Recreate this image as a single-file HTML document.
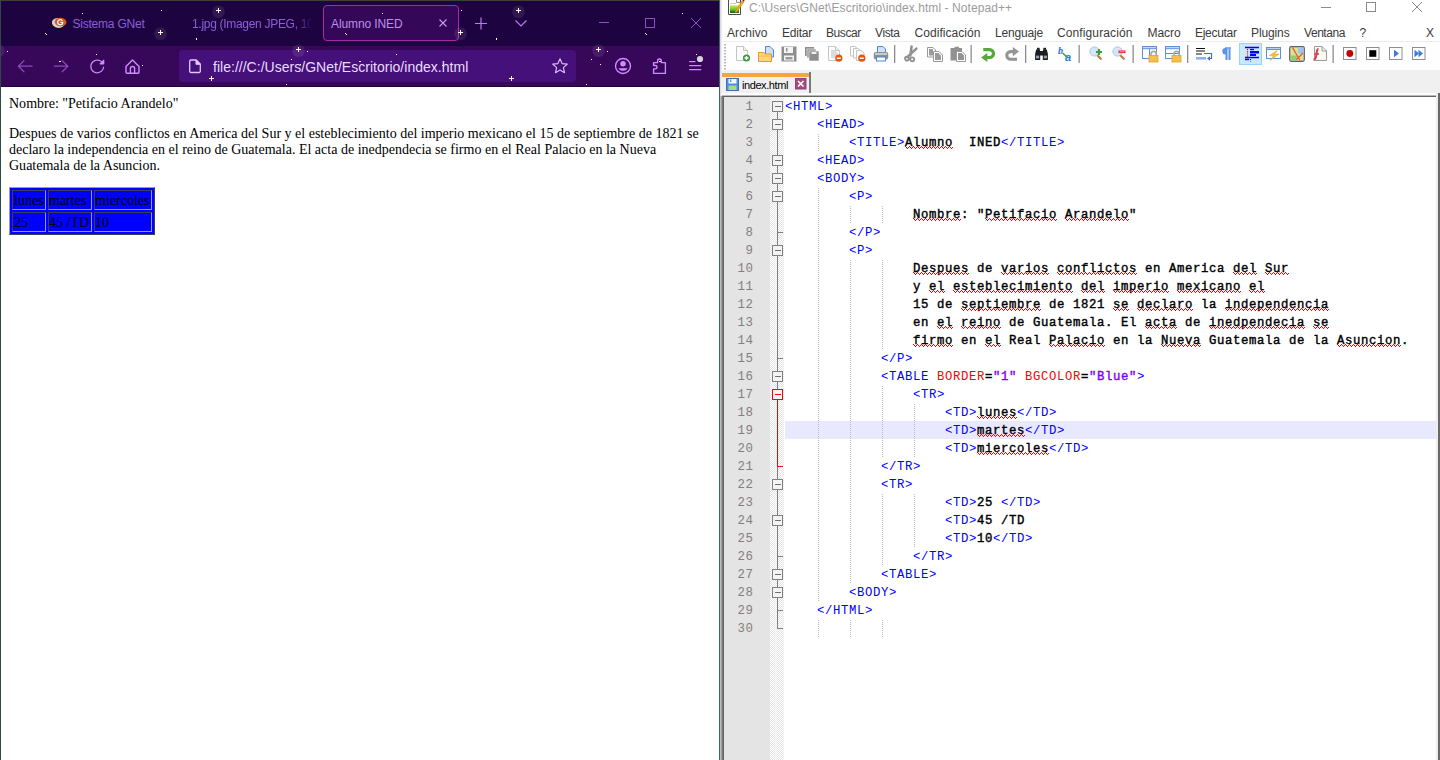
<!DOCTYPE html>
<html><head><meta charset="utf-8"><title>Alumno INED</title>
<style>
*{box-sizing:border-box}
html,body{margin:0;padding:0}
body{width:1440px;height:760px;position:relative;overflow:hidden;background:#fff;font-family:"Liberation Sans",sans-serif}
.abs{position:absolute}
#ff{position:absolute;left:0;top:0;width:720px;height:760px;overflow:hidden;background:#fff}
#tabbar{position:absolute;left:0;top:0;width:720px;height:46px;background:#1e0341}
#navbar{position:absolute;left:0;top:46px;width:720px;height:41px;background:#37075a;border-bottom:1px solid #21023f}
.t12{font-size:12px;line-height:14px;white-space:pre;position:absolute}
#page{position:absolute;left:1px;top:87px;width:718px;height:673px;background:#fff;font-family:"Liberation Serif",serif;font-size:14.03px;line-height:16px;color:#000}
#page div.p{position:absolute;left:8px;white-space:pre}
#npp{position:absolute;left:720px;top:0;width:720px;height:760px;background:#fff;overflow:hidden}
.menu{position:absolute;top:26px;font-size:12px;line-height:14px;color:#3a3a3a;white-space:pre}
#ed{position:absolute;left:0;top:96px;width:720px;height:664px;font-family:"Liberation Mono",monospace;font-size:13.333px}
.ln{position:absolute;left:4px;width:29.5px;text-align:right;color:#808080;height:18px;line-height:20px;font-size:12.4px;letter-spacing:0.55px}
.cl{position:absolute;left:65px;height:18px;line-height:20px;white-space:pre;color:#000;font-size:12.3px;letter-spacing:0.62px;font-weight:normal;-webkit-text-stroke:0.4px #000}
.cl b{font-weight:normal;color:#0000ff;-webkit-text-stroke:0}
.cl i{font-style:normal;font-weight:normal;color:#ff0000;-webkit-text-stroke:0}
.cl u{text-decoration:none;color:#8000ff;-webkit-text-stroke:0.4px #8000ff}
</style></head><body>

<div id="ff">
<div id="tabbar"></div><div id="navbar"></div>
<div class="abs" style="left:323px;top:5px;width:136px;height:36px;background:#340758;border:1px solid #a826b0;border-radius:4px"></div><div class="abs" style="left:179px;top:50px;width:397px;height:32px;background:#45107a;border-radius:4px"></div><svg class="abs" style="left:0;top:0" width="720" height="87" viewBox="0 0 720 87" shape-rendering="crispEdges"><circle cx="-81.5" cy="11.8" r="6.3" fill="#fff" opacity="0.085" shape-rendering="auto"/><circle cx="-139.5" cy="33.8" r="6.3" fill="#fff" opacity="0.085" shape-rendering="auto"/><circle cx="-1.5" cy="50.8" r="6.3" fill="#fff" opacity="0.085" shape-rendering="auto"/><rect x="-218" y="13" width="1" height="1" fill="#fffbe8"/><rect x="-139" y="10" width="1" height="1" fill="#fffbe8"/><rect x="-255" y="33" width="1" height="1" fill="#fffbe8"/><rect x="-254" y="34" width="1" height="1" fill="#fffbe8"/><rect x="-104" y="38" width="1" height="2" fill="#fffbe8"/><rect x="-293" y="51" width="1" height="1" fill="#fffbe8"/><rect x="-204" y="54" width="1" height="1" fill="#fffbe8"/><rect x="-240" y="61" width="1" height="1" fill="#fffbe8"/><rect x="-241" y="61" width="1" height="1" fill="#fffbe8"/><rect x="-158" y="65" width="1" height="1" fill="#fffbe8"/><rect x="-9" y="59" width="1" height="1" fill="#fffbe8"/><rect x="-14" y="84" width="1" height="1" fill="#fffbe8"/><rect x="-300" y="64" width="1" height="1" fill="#fffbe8"/><rect x="-84" y="10" width="5" height="1" fill="#fffbe8"/><rect x="-82" y="8" width="1" height="5" fill="#fffbe8"/><rect x="-142" y="32" width="5" height="1" fill="#fffbe8"/><rect x="-140" y="30" width="1" height="5" fill="#fffbe8"/><rect x="-4" y="49" width="5" height="1" fill="#fffbe8"/><rect x="-2" y="47" width="1" height="5" fill="#fffbe8"/><rect x="-91" y="78" width="5" height="1" fill="#fffbe8"/><rect x="-89" y="76" width="1" height="5" fill="#fffbe8"/><circle cx="218.5" cy="11.8" r="6.3" fill="#fff" opacity="0.085" shape-rendering="auto"/><circle cx="160.5" cy="33.8" r="6.3" fill="#fff" opacity="0.085" shape-rendering="auto"/><circle cx="298.5" cy="50.8" r="6.3" fill="#fff" opacity="0.085" shape-rendering="auto"/><rect x="82" y="13" width="1" height="1" fill="#fffbe8"/><rect x="161" y="10" width="1" height="1" fill="#fffbe8"/><rect x="45" y="33" width="1" height="1" fill="#fffbe8"/><rect x="46" y="34" width="1" height="1" fill="#fffbe8"/><rect x="196" y="38" width="1" height="2" fill="#fffbe8"/><rect x="7" y="51" width="1" height="1" fill="#fffbe8"/><rect x="96" y="54" width="1" height="1" fill="#fffbe8"/><rect x="60" y="61" width="1" height="1" fill="#fffbe8"/><rect x="59" y="61" width="1" height="1" fill="#fffbe8"/><rect x="142" y="65" width="1" height="1" fill="#fffbe8"/><rect x="291" y="59" width="1" height="1" fill="#fffbe8"/><rect x="286" y="84" width="1" height="1" fill="#fffbe8"/><rect x="0" y="64" width="1" height="1" fill="#fffbe8"/><rect x="216" y="10" width="5" height="1" fill="#fffbe8"/><rect x="218" y="8" width="1" height="5" fill="#fffbe8"/><rect x="158" y="32" width="5" height="1" fill="#fffbe8"/><rect x="160" y="30" width="1" height="5" fill="#fffbe8"/><rect x="296" y="49" width="5" height="1" fill="#fffbe8"/><rect x="298" y="47" width="1" height="5" fill="#fffbe8"/><rect x="209" y="78" width="5" height="1" fill="#fffbe8"/><rect x="211" y="76" width="1" height="5" fill="#fffbe8"/><circle cx="518.5" cy="11.8" r="6.3" fill="#fff" opacity="0.085" shape-rendering="auto"/><circle cx="460.5" cy="33.8" r="6.3" fill="#fff" opacity="0.085" shape-rendering="auto"/><circle cx="598.5" cy="50.8" r="6.3" fill="#fff" opacity="0.085" shape-rendering="auto"/><rect x="382" y="13" width="1" height="1" fill="#fffbe8"/><rect x="461" y="10" width="1" height="1" fill="#fffbe8"/><rect x="345" y="33" width="1" height="1" fill="#fffbe8"/><rect x="346" y="34" width="1" height="1" fill="#fffbe8"/><rect x="496" y="38" width="1" height="2" fill="#fffbe8"/><rect x="307" y="51" width="1" height="1" fill="#fffbe8"/><rect x="396" y="54" width="1" height="1" fill="#fffbe8"/><rect x="360" y="61" width="1" height="1" fill="#fffbe8"/><rect x="359" y="61" width="1" height="1" fill="#fffbe8"/><rect x="442" y="65" width="1" height="1" fill="#fffbe8"/><rect x="591" y="59" width="1" height="1" fill="#fffbe8"/><rect x="586" y="84" width="1" height="1" fill="#fffbe8"/><rect x="300" y="64" width="1" height="1" fill="#fffbe8"/><rect x="516" y="10" width="5" height="1" fill="#fffbe8"/><rect x="518" y="8" width="1" height="5" fill="#fffbe8"/><rect x="458" y="32" width="5" height="1" fill="#fffbe8"/><rect x="460" y="30" width="1" height="5" fill="#fffbe8"/><rect x="596" y="49" width="5" height="1" fill="#fffbe8"/><rect x="598" y="47" width="1" height="5" fill="#fffbe8"/><rect x="509" y="78" width="5" height="1" fill="#fffbe8"/><rect x="511" y="76" width="1" height="5" fill="#fffbe8"/><circle cx="818.5" cy="11.8" r="6.3" fill="#fff" opacity="0.085" shape-rendering="auto"/><circle cx="760.5" cy="33.8" r="6.3" fill="#fff" opacity="0.085" shape-rendering="auto"/><circle cx="898.5" cy="50.8" r="6.3" fill="#fff" opacity="0.085" shape-rendering="auto"/><rect x="682" y="13" width="1" height="1" fill="#fffbe8"/><rect x="761" y="10" width="1" height="1" fill="#fffbe8"/><rect x="645" y="33" width="1" height="1" fill="#fffbe8"/><rect x="646" y="34" width="1" height="1" fill="#fffbe8"/><rect x="796" y="38" width="1" height="2" fill="#fffbe8"/><rect x="607" y="51" width="1" height="1" fill="#fffbe8"/><rect x="696" y="54" width="1" height="1" fill="#fffbe8"/><rect x="660" y="61" width="1" height="1" fill="#fffbe8"/><rect x="659" y="61" width="1" height="1" fill="#fffbe8"/><rect x="742" y="65" width="1" height="1" fill="#fffbe8"/><rect x="891" y="59" width="1" height="1" fill="#fffbe8"/><rect x="886" y="84" width="1" height="1" fill="#fffbe8"/><rect x="600" y="64" width="1" height="1" fill="#fffbe8"/><rect x="816" y="10" width="5" height="1" fill="#fffbe8"/><rect x="818" y="8" width="1" height="5" fill="#fffbe8"/><rect x="758" y="32" width="5" height="1" fill="#fffbe8"/><rect x="760" y="30" width="1" height="5" fill="#fffbe8"/><rect x="896" y="49" width="5" height="1" fill="#fffbe8"/><rect x="898" y="47" width="1" height="5" fill="#fffbe8"/><rect x="809" y="78" width="5" height="1" fill="#fffbe8"/><rect x="811" y="76" width="1" height="5" fill="#fffbe8"/></svg><svg class="abs" style="left:50px;top:15px" width="20" height="16" viewBox="50 15 20 16"><ellipse cx="57.8" cy="24.2" rx="6.6" ry="4.6" fill="#0c0c0c" transform="rotate(18 57.8 24.2)"/><ellipse cx="58.2" cy="23" rx="6.4" ry="4.9" fill="#cfcfd8" transform="rotate(12 58.2 23)"/><ellipse cx="60.6" cy="22" rx="5.9" ry="4.3" fill="#e4560e" transform="rotate(8 60.6 22)"/><path d="M62.4 20.6A2.7 2.5 0 1 0 62.6 23.6V22.4H60.6" fill="none" stroke="#fff" stroke-width="1.25"/></svg><div class="t12" style="left:72.5px;top:17px;color:#8a5fd6;letter-spacing:-0.22px">Sistema GNet</div><div class="t12" style="left:192px;top:17px;width:121px;overflow:hidden;color:#8a5fd6;letter-spacing:-0.3px;-webkit-mask-image:linear-gradient(90deg,#000 84%,transparent 100%);mask-image:linear-gradient(90deg,#000 84%,transparent 100%)">1.jpg (Imagen JPEG, 1000</div><div class="t12" style="left:331px;top:17px;color:#b98fe8;letter-spacing:-0.1px">Alumno INED</div><svg class="abs" style="left:436px;top:16px" width="14" height="14" viewBox="0 0 14 14"><path d="M3.5 3.5L10.5 10.5M10.5 3.5L3.5 10.5" stroke="#c59cf0" stroke-width="1.1" fill="none"/></svg><svg class="abs" style="left:470px;top:10px" width="250" height="28" viewBox="0 0 250 28"><g stroke="#b77cf0" stroke-width="1.2" fill="none"><path d="M5 13.5H17M11 7.5V19.5"/><path d="M45.5 10.5L51 16L56.5 10.5"/></g><g stroke="#8a4fc8" stroke-width="1" fill="none"><path d="M129 12.5H139"/><rect x="175.5" y="8.5" width="9" height="9"/><path d="M221 8L231 18M231 8L221 18"/></g></svg><svg class="abs" style="left:10px;top:52px" width="140" height="28" viewBox="10 52 140 28"><g stroke="#8b49ba" stroke-width="1.25" fill="none" stroke-linecap="round" stroke-linejoin="round"><path d="M32 66.2H18.6M24 60.6L18.4 66.2L24 71.8"/><path d="M54.4 66.2H67.6M62.2 60.6L67.8 66.2L62.2 71.8"/></g><g transform="translate(89.3 58.4) scale(1.0)" fill="#d08cff"><path d="M10.707 6H14.25A.75.75 0 0 0 15 5.25V1.707a.5.5 0 0 0-.854-.353l-1.459 1.459A6.95 6.95 0 0 0 8 1C4.141 1 1 4.141 1 8s3.141 7 7 7a6.97 6.97 0 0 0 6.968-6.322.626.626 0 0 0-.562-.682.635.635 0 0 0-.682.562A5.726 5.726 0 0 1 8 13.750c-3.171 0-5.750-2.579-5.750-5.750S4.829 2.250 8 2.250a5.710 5.710 0 0 1 3.805 1.445l-1.451 1.451a.5.5 0 0 0 .353.854z"/></g><g stroke="#d08cff" stroke-width="1.4" fill="none" stroke-linejoin="round"><path d="M126 66.4L132.5 59.9L139 66.4V72.2A1 1 0 0 1 138 73.2H127A1 1 0 0 1 126 72.2Z"/><path d="M130.4 73V68.6A2.1 2.1 0 0 1 134.6 68.6V73"/></g></svg><svg class="abs" style="left:188px;top:59px" width="14" height="15" viewBox="0 0 14 15"><path d="M1.7 2.2A1.2 1.2 0 0 1 2.9 1H8.2L12.3 5.1V12.3A1.2 1.2 0 0 1 11.1 13.5H2.9A1.2 1.2 0 0 1 1.7 12.3Z" fill="none" stroke="#e3c8ff" stroke-width="1.3"/><path d="M8 1V5.3H12.3" fill="#e3c8ff" stroke="#e3c8ff" stroke-width="1"/></svg><div class="abs" style="left:213px;top:59px;font-size:14px;line-height:17px;color:#eadcff;white-space:pre;letter-spacing:0.02px">file:///C:/Users/GNet/Escritorio/index.html</div><svg class="abs" style="left:551px;top:57px" width="18" height="18" viewBox="0 0 18 18"><path d="M9 1.8L11.1 6.6L16.3 7.1L12.4 10.6L13.5 15.7L9 13.1L4.5 15.7L5.6 10.6L1.7 7.1L6.9 6.6Z" fill="none" stroke="#e0bdf8" stroke-width="1.15" stroke-linejoin="round"/></svg><svg class="abs" style="left:610px;top:52px" width="100" height="28" viewBox="610 52 100 28"><g stroke="#d08cff" stroke-width="1.35" fill="none" stroke-linejoin="round"><circle cx="623" cy="66" r="7.5"/><circle cx="623" cy="63.8" r="2.1" fill="#d08cff"/><path d="M618.8 68.6H627.2A4.6 3.2 0 0 1 618.8 68.6Z" fill="#d08cff" stroke-width=".6"/><path d="M653.6 73.4V68.9H655.3A1.7 1.7 0 0 0 655.3 65.5H653.6V62.6H657.6V60.9A1.85 1.85 0 0 1 661.3 60.9V62.6H665.4V73.4Z"/><path d="M689.6 61.5H695M689.6 65.6H700.8M689.6 69.7H700.8" stroke-linecap="round" stroke-width="1.25"/></g><circle cx="700" cy="59" r="3.1" fill="#d9d2de"/></svg>
<div id="page">
<div class="p" style="top:8px">Nombre: "Petifacio Arandelo"</div>
<div class="p" style="top:38px">Despues de varios conflictos en America del Sur y el esteblecimiento del imperio mexicano el 15 de septiembre de 1821 se
declaro la independencia en el reino de Guatemala. El acta de inedpendecia se firmo en el Real Palacio en la Nueva
Guatemala de la Asuncion.</div>
<div class="abs" id="tbl" style="left:8px;top:100px;width:146px;height:48px;background:#0000ff;border:1px solid;border-color:#9a9aa8 #3c3c58 #3c3c58 #9a9aa8"></div>
<div class="abs" style="left:11px;top:103px;width:34px;height:20px;border:1px solid;border-color:#3c3c58 #9a9aa8 #9a9aa8 #3c3c58;padding:1px 0 0 1px;white-space:pre;line-height:16px">lunes</div>
<div class="abs" style="left:47px;top:103px;width:44px;height:20px;border:1px solid;border-color:#3c3c58 #9a9aa8 #9a9aa8 #3c3c58;padding:1px 0 0 0px;white-space:pre;line-height:16px">martes</div>
<div class="abs" style="left:93px;top:103px;width:58px;height:20px;border:1px solid;border-color:#3c3c58 #9a9aa8 #9a9aa8 #3c3c58;padding:1px 0 0 0px;white-space:pre;line-height:16px">miercoles</div>
<div class="abs" style="left:11px;top:125px;width:34px;height:20px;border:1px solid;border-color:#3c3c58 #9a9aa8 #9a9aa8 #3c3c58;padding:1px 0 0 1px;white-space:pre;line-height:16px">25</div>
<div class="abs" style="left:47px;top:125px;width:44px;height:20px;border:1px solid;border-color:#3c3c58 #9a9aa8 #9a9aa8 #3c3c58;padding:1px 0 0 0px;white-space:pre;line-height:16px">45 /TD</div>
<div class="abs" style="left:93px;top:125px;width:58px;height:20px;border:1px solid;border-color:#3c3c58 #9a9aa8 #9a9aa8 #3c3c58;padding:1px 0 0 0px;white-space:pre;line-height:16px">10</div>
</div>
<div class="abs" style="left:0;top:0;width:720px;height:1px;background:#3f4039"></div>
<div class="abs" style="left:0;top:0;width:1px;height:760px;background:#2f4a45"></div>
<div class="abs" style="left:719px;top:0;width:1px;height:760px;background:#3d6663"></div>
</div>
<div id="npp">
<div class="t12" style="left:29px;top:1px;color:#9b9b9b;letter-spacing:0.08px">C:\Users\GNet\Escritorio\index.html - Notepad++</div>
<svg class="abs" style="left:590px;top:0" width="130" height="20" viewBox="0 0 130 20"><g stroke="#8a8a8a" stroke-width="1" fill="none"><path d="M11 7.5H21"/><rect x="56.5" y="2.5" width="9" height="9"/><path d="M102 2L112 12M112 2L102 12"/></g></svg>
<div class="menu" style="left:7px;letter-spacing:0.07px">Archivo</div>
<div class="menu" style="left:62px;letter-spacing:-0.23px">Editar</div>
<div class="menu" style="left:106px;letter-spacing:-0.43px">Buscar</div>
<div class="menu" style="left:155px;letter-spacing:-0.39px">Vista</div>
<div class="menu" style="left:194.5px;letter-spacing:0.05px">Codificación</div>
<div class="menu" style="left:275px;letter-spacing:-0.17px">Lenguaje</div>
<div class="menu" style="left:337px;letter-spacing:0.11px">Configuración</div>
<div class="menu" style="left:427.5px;letter-spacing:-0.07px">Macro</div>
<div class="menu" style="left:475px;letter-spacing:-0.29px">Ejecutar</div>
<div class="menu" style="left:531px;letter-spacing:-0.12px">Plugins</div>
<div class="menu" style="left:584px;letter-spacing:-0.44px">Ventana</div>
<div class="menu" style="left:639.5px;letter-spacing:0.00px">?</div>
<div class="menu" style="left:706px;letter-spacing:0.00px">X</div>
<div class="abs" style="left:0;top:41px;width:720px;height:1px;background:#ececec"></div>
<div class="abs" style="left:0;top:42px;width:720px;height:28px;background:#fefefe"></div>
<div class="abs" style="left:0;top:70px;width:720px;height:26px;background:#f0f0f0"></div>
<div class="abs" style="left:2px;top:72px;width:89px;height:23px;background:#f0f0f0;border-right:2px solid #7a7a7a"></div>
<div class="abs" style="left:2px;top:73px;width:87px;height:4px;background:#f9a33b"></div>
<div class="abs" style="left:22px;top:78px;color:#000;font-size:11px;line-height:14px;letter-spacing:-0.42px;white-space:pre">index.html</div>
<svg class="abs" style="left:0;top:42px" width="720" height="54" viewBox="720 42 720 54"><rect x="724" y="44" width="2" height="1.5" fill="#b8b8b8"/><rect x="724" y="47" width="2" height="1.5" fill="#b8b8b8"/><rect x="724" y="50" width="2" height="1.5" fill="#b8b8b8"/><rect x="724" y="53" width="2" height="1.5" fill="#b8b8b8"/><rect x="724" y="56" width="2" height="1.5" fill="#b8b8b8"/><rect x="724" y="59" width="2" height="1.5" fill="#b8b8b8"/><rect x="724" y="62" width="2" height="1.5" fill="#b8b8b8"/><rect x="724" y="65" width="2" height="1.5" fill="#b8b8b8"/><rect x="724" y="68" width="2" height="1.5" fill="#b8b8b8"/><rect x="894.0" y="45" width="1.3" height="18" fill="#8d8d8d"/><rect x="970.5" y="45" width="1.3" height="18" fill="#8d8d8d"/><rect x="1025.0" y="45" width="1.3" height="18" fill="#8d8d8d"/><rect x="1078.5" y="45" width="1.3" height="18" fill="#8d8d8d"/><rect x="1132.5" y="45" width="1.3" height="18" fill="#8d8d8d"/><rect x="1187.0" y="45" width="1.3" height="18" fill="#8d8d8d"/><rect x="1332.5" y="45" width="1.3" height="18" fill="#8d8d8d"/><g transform="translate(735 46)"><path d="M1.5 .5H8.5L12.5 4.5V14.5H1.5Z" fill="#fdfdfd" stroke="#c4c4c4"/><path d="M8.5 .5V4.5H12.5" fill="#eee" stroke="#c4c4c4"/><circle cx="11.5" cy="12" r="3.6" fill="#3a9a3a"/><path d="M9.5 12H13.5M11.5 10V14" stroke="#fff" stroke-width="1.4"/></g><g transform="translate(758 46)"><path d="M7.5 .5H12L15.5 4V11H7.5Z" fill="#cfe0f8" stroke="#4f86d8"/><path d="M.5 6.5H6L7 8H13.5V15.5H.5Z" fill="#fbd97a" stroke="#e39a2c"/><path d="M1 10H13" stroke="#f3b64e"/></g><g transform="translate(781 46)"><rect x=".5" y=".5" width="15" height="15" fill="#8e8e8e"/><rect x="3" y="1" width="9" height="6" fill="#f4f4f4"/><rect x="5" y="2" width="1.5" height="3.5" fill="#8e8e8e"/><rect x="3" y="9.5" width="10" height="5" fill="#f4f4f4"/><rect x="4.5" y="11" width="7" height="2.5" fill="#9a9a9a"/></g><g transform="translate(804 46)"><rect x="1" y="1" width="9" height="9" fill="#8e8e8e"/><rect x="3" y="3" width="9" height="9" fill="#8e8e8e" stroke="#fff" stroke-width=".6"/><rect x="5" y="5" width="10" height="10" fill="#8e8e8e" stroke="#fff" stroke-width=".6"/><rect x="7.5" y="6" width="5" height="2" fill="#eee"/></g><g transform="translate(827 46)"><path d="M1.5 .5H8.5L12.5 4.5V14.5H1.5Z" fill="#fdfdfd" stroke="#c4c4c4"/><path d="M8.5 .5V4.5H12.5" fill="#eee" stroke="#c4c4c4"/><path d="M4 5H9M4 7H10.5M4 9H10.5M4 11H8" stroke="#b9b9b9"/><circle cx="11.8" cy="12.2" r="3.6" fill="#e4560e"/><path d="M9.8 12.2H13.8" stroke="#fff" stroke-width="1.5"/></g><g transform="translate(850 46)"><path d="M.5 .5H5L8 3V10H.5Z" fill="#fdfdfd" stroke="#c4c4c4"/><path d="M3.5 2.5H8L11 5V12H3.5Z" fill="#fdfdfd" stroke="#c4c4c4"/><path d="M6.5 4.5H11L14 7V14.5H6.5Z" fill="#fdfdfd" stroke="#c4c4c4"/><circle cx="11.8" cy="12.2" r="3.6" fill="#e4560e"/><path d="M9.8 12.2H13.8" stroke="#fff" stroke-width="1.5"/></g><g transform="translate(873 46)"><path d="M4.5 .5H10L12.5 3V7H4.5Z" fill="#cfe2fb" stroke="#4f86d8"/><rect x=".8" y="6" width="14.4" height="7.5" rx="2" fill="#8f8f8f"/><rect x="2" y="7.2" width="12" height="1.6" fill="#d9d9d9"/><rect x="3.5" y="11" width="9" height="4" fill="#fff" stroke="#4f86d8"/></g><g transform="translate(904 46)"><path d="M7.6 .5L6.3 9.5M12.4 2.6L3.2 11.2" stroke="#8f8f8f" stroke-width="2.5" stroke-linecap="round"/><circle cx="3" cy="12.6" r="2" fill="none" stroke="#8f8f8f" stroke-width="1.8"/><circle cx="8.2" cy="13.3" r="2" fill="none" stroke="#8f8f8f" stroke-width="1.8"/></g><g transform="translate(927 46)"><path d="M.5 1.5H6L8.5 4V11H.5Z" fill="#fff" stroke="#9a9a9a"/><path d="M2 3H6V9.5H2Z" fill="#9a9a9a"/><path d="M6.5 5.5H12L15.5 9V15.5H6.5Z" fill="#fff" stroke="#9a9a9a"/><path d="M8 7H11.5L14 9.5V14H8Z" fill="#9a9a9a"/></g><g transform="translate(950 46)"><path d="M.5 2H4.5V.8H9V2H12V14.5H.5Z" fill="#929292"/><path d="M6.5 5.5H12L15.5 9V15.5H6.5Z" fill="#fff" stroke="#9a9a9a"/><path d="M8 7H11.5L14 9.5V14H8Z" fill="#929292"/></g><g transform="translate(981 46)"><path d="M2.3 3.7H8.6A3.9 3.9 0 0 1 8.6 11.5H5.5" fill="none" stroke="#55a83a" stroke-width="3.2"/><path d="M0 11.5L6.3 6.9V16Z" fill="#55a83a"/></g><g transform="translate(1004 46)"><path d="M9.5 5.6H6.6A3.8 3.8 0 0 0 6.6 13.2H13" fill="none" stroke="#949494" stroke-width="3.1"/><path d="M15 5.6L8.8 1V10.2Z" fill="#949494"/></g><g transform="translate(1035 46)"><path d="M1.2 3.4H5V5H8V3.4H11.8L12.9 8V14H7.8V9.6H5.2V14H.1V8Z" fill="#1c1c1c"/><rect x="1" y="9.6" width="3.2" height="2.8" fill="#8aa0b8"/><rect x="8.8" y="9.6" width="3.2" height="2.8" fill="#8aa0b8"/><rect x="2" y="1.8" width="2.6" height="2" fill="#1c1c1c"/><rect x="8.4" y="1.8" width="2.6" height="2" fill="#1c1c1c"/></g><g transform="translate(1058 46)"><text x="0" y="8" font-family="Liberation Serif" font-style="italic" font-weight="bold" font-size="10" fill="#2c6fd8">b</text><text x="7" y="15" font-family="Liberation Sans" font-style="italic" font-weight="bold" font-size="11" fill="#2c7be0">a</text><path d="M4.5 7L9 11" stroke="#3aa048" stroke-width="1.5"/><path d="M9.8 11.8L6.8 11.2L9.2 8.8Z" fill="#3aa048"/></g><g transform="translate(1089 46)"><path d="M8.3 9.3L11.8 12.8" stroke="#b97e3c" stroke-width="2.2" stroke-linecap="round"/><circle cx="5.5" cy="5.5" r="4.6" fill="#d5e5fa" stroke="#a9c6ee"/><path d="M7 6H13M10 3V9" stroke="#3f9a3a" stroke-width="2.2"/></g><g transform="translate(1112 46)"><path d="M8.3 9.3L11.8 12.8" stroke="#b97e3c" stroke-width="2.2" stroke-linecap="round"/><circle cx="5.5" cy="5.5" r="4.6" fill="#d5e5fa" stroke="#a9c6ee"/><rect x="6.5" y="4.5" width="7" height="2.6" fill="#ee1c25"/><rect x="7.5" y="5.3" width="5" height=".9" fill="#f9a0a4"/></g><g transform="translate(1142 46)"><rect x=".5" y=".5" width="14" height="12" fill="#fff" stroke="#5f8fd8"/><rect x=".5" y=".5" width="14" height="2.2" fill="#c5d9f6" stroke="#5f8fd8"/><path d="M7.5 2.5V12.5" stroke="#5f8fd8"/><path d="M9 10V8A2.6 2.6 0 0 1 14.2 8V10" fill="none" stroke="#a9a9a9" stroke-width="1.6"/><rect x="7" y="9.5" width="9" height="6.5" fill="#f4c04a" stroke="#e2a227" stroke-width=".8"/></g><g transform="translate(1165 46)"><rect x=".5" y=".5" width="14" height="12" fill="#fff" stroke="#5f8fd8"/><rect x=".5" y=".5" width="14" height="2.2" fill="#c5d9f6" stroke="#5f8fd8"/><path d="M.5 7.5H14.5" stroke="#5f8fd8"/><path d="M9 10V8A2.6 2.6 0 0 1 14.2 8V10" fill="none" stroke="#a9a9a9" stroke-width="1.6"/><rect x="7" y="9.5" width="9" height="6.5" fill="#f4c04a" stroke="#e2a227" stroke-width=".8"/></g><g transform="translate(1196 46)"><path d="M0 2.5H9M0 5H9M0 8H6" stroke="#111" stroke-width="1.2"/><rect x="0" y="11" width="10" height="2.6" fill="#8db2ea"/><path d="M8 7.5H15.5V12.5H12" fill="none" stroke="#3f6fbe" stroke-width="1.2"/><path d="M11 12.5L14 10.3V14.7Z" fill="#3f6fbe"/></g><g transform="translate(1220 46)"><path d="M6.5 2.5V14M9.5 2.5V14" stroke="#5b93e6" stroke-width="2"/><path d="M7 2H5.5A3.2 3.2 0 0 0 5.5 8.4H7Z" fill="#5b93e6"/><path d="M5 2H11" stroke="#5b93e6" stroke-width="1.4"/></g><rect x="1239.5" y="43.5" width="22" height="21" fill="#cce8ff" stroke="#99d1ff"/><g transform="translate(1243 46)"><path d="M2 1.5H16M2 11.5H16M2 13.5H6" stroke="#0000ff" stroke-width="1.3"/><path d="M7 3.5H11" stroke="#0000ff" stroke-width="1.3"/><rect x="7" y="5" width="9" height="2.5" fill="#0000ff"/><rect x="7" y="8" width="6" height="2" fill="#0000ff"/><path d="M4.5 3V11" stroke="#ff0000" stroke-width="1.2" stroke-dasharray="1.2 1"/><path d="M7.5 13V15.5" stroke="#0000ff" stroke-width="1.2" stroke-dasharray="1 1"/></g><g transform="translate(1266 46)"><rect x=".5" y="1.5" width="14" height="11" fill="#fff" stroke="#5f8fd8"/><rect x=".5" y="1.5" width="14" height="2" fill="#b9d0f3" stroke="#5f8fd8"/><path d="M11 4.5L3.5 9.5H7.5L4 14.5L13 8H8.5Z" fill="#f2c13d" stroke="#e0a529" stroke-width=".6"/></g><g transform="translate(1289 46)"><rect x=".7" y=".7" width="14.6" height="14.6" rx="1.5" fill="#d9e28e" stroke="#5c5c7c" stroke-width="1.2"/><rect x="9" y="1.5" width="5.5" height="6" fill="#9cc4ee"/><rect x="2" y="9.5" width="6" height="5" fill="#8fce6e"/><path d="M3.5 1.5L11 14.5M14 7L7.5 13.5" stroke="#f0523a" stroke-width="1.3"/></g><g transform="translate(1312 46)"><path d="M2.5 .5H10L14.5 5V14.5H2.5Z" fill="#fbfbf6" stroke="#9a9a9a"/><path d="M10 .5V5H14.5" fill="none" stroke="#9a9a9a"/><path d="M6.5 3C4.8 3 4.8 5 4.5 8C4.2 11 4 13.5 1.5 13.8" fill="none" stroke="#e03a4a" stroke-width="2"/><path d="M2.5 8H7" stroke="#e03a4a" stroke-width="1.6"/></g><g transform="translate(1343 46)"><rect x=".5" y="1.5" width="12.5" height="12" fill="#fff" stroke="#8e8e8e" stroke-width="1"/><circle cx="6.8" cy="7.5" r="3.4" fill="#c80000"/></g><g transform="translate(1366 46)"><rect x=".5" y="1.5" width="12.5" height="12" fill="#fff" stroke="#8e8e8e" stroke-width="1"/><rect x="3.3" y="4.2" width="7" height="6.6" fill="#000"/></g><g transform="translate(1389 46)"><rect x=".5" y="1.5" width="12.5" height="12" fill="#fff" stroke="#8e8e8e" stroke-width="1"/><path d="M5 3.8L10 7.5L5 11.2Z" fill="#3b79e0"/></g><g transform="translate(1412 46)"><rect x=".5" y="1.5" width="12.5" height="12" fill="#fff" stroke="#8e8e8e" stroke-width="1"/><path d="M2.5 3.8L7 7.5L2.5 11.2Z" fill="#3b79e0"/><path d="M6.5 3.8L11 7.5L6.5 11.2Z" fill="#3b79e0"/></g><g transform="translate(726 78)"><rect x=".5" y=".5" width="12" height="12" fill="#4f8fe0" stroke="#3b6fc0"/><rect x="2.5" y="1" width="8" height="4.5" fill="#f4f8ff"/><rect x="4" y="1.5" width="1.3" height="2.5" fill="#4f8fe0"/><rect x="2.5" y="7.5" width="8" height="4.5" fill="#a6d88c"/></g><g transform="translate(795 78)"><rect x=".5" y=".5" width="10.5" height="10.5" fill="#a34f74" stroke="#8a3f8f" stroke-width="1"/><path d="M3 3L8.5 8.5M8.5 3L3 8.5" stroke="#fff" stroke-width="1.6"/></g></svg><svg class="abs" style="left:6px;top:0" width="20" height="17" viewBox="726 0 20 17"><defs><linearGradient id="gg" x1="0" y1="0" x2="0" y2="1"><stop offset="0" stop-color="#d8e84a"/><stop offset=".55" stop-color="#6cc43a"/><stop offset=".85" stop-color="#1f7a14"/><stop offset="1" stop-color="#0d4d08"/></linearGradient></defs><path d="M728.5 -1V14.5H740.5V-1" fill="#fff" stroke="#4a4a4a"/><path d="M736.5 -1V2.5H740.5" fill="#f4f4f4" stroke="#777" stroke-width=".8"/><path d="M730 3.5H736" stroke="#a9c4de" stroke-width=".8"/><rect x="730" y="5.3" width="9" height="7.6" fill="url(#gg)"/><path d="M742.2 .4L735.7 10.9L735.3 12.2L736.9 11.8L744.1 1.6Z" fill="#f5a818" stroke="#dc8e0c" stroke-width=".7"/><path d="M742.5 .8L743.9 1.6L744.6 .2L743.5 -.5Z" fill="#a01010"/><path d="M741.5 2L742.9 2.8" stroke="#7aa0d8" stroke-width="1"/></svg>
<div id="ed">
<div class="abs" style="left:0;top:0;width:716px;height:1px;background:#646464"></div>
<div class="abs" style="left:4px;top:1px;width:46px;height:663px;background:#e4e4e4"></div>
<div class="abs" style="left:50px;top:1px;width:14px;height:663px;background:repeating-conic-gradient(#ffffff 0% 25%,#e6e6e6 0% 50%) 0 0/2px 2px"></div>
<div class="abs" style="left:0;top:0;width:4px;height:664px;background:linear-gradient(90deg,#d0d0d0,#8a8a8a 50%,#555 100%)"></div>
<div class="abs" style="left:716px;top:-3px;width:2px;height:667px;background:#ededed"></div>
<div class="abs" style="left:718px;top:-3px;width:2px;height:667px;background:#696969"></div>
<div class="abs" style="left:0;top:-3px;width:716px;height:2px;background:#fdfdfd"></div>
<div class="abs" style="left:0;top:-1px;width:716px;height:1px;background:#b9b9b9"></div>
<div class="abs" style="left:65px;top:325px;width:651px;height:18px;background:#e8e8ff"></div>
<div class="ln" style="top:1px">1</div>
<div class="cl" style="top:1px"><b>&lt;HTML&gt;</b></div>
<div class="ln" style="top:19px">2</div>
<div class="cl" style="top:19px">    <b>&lt;HEAD&gt;</b></div>
<div class="ln" style="top:37px">3</div>
<div class="cl" style="top:37px">        <b>&lt;TITLE&gt;</b>Alumno  INED<b>&lt;/TITLE&gt;</b></div>
<div class="ln" style="top:55px">4</div>
<div class="cl" style="top:55px">    <b>&lt;HEAD&gt;</b></div>
<div class="ln" style="top:73px">5</div>
<div class="cl" style="top:73px">    <b>&lt;BODY&gt;</b></div>
<div class="ln" style="top:91px">6</div>
<div class="cl" style="top:91px">        <b>&lt;P&gt;</b></div>
<div class="ln" style="top:109px">7</div>
<div class="cl" style="top:109px">                Nombre: "Petifacio Arandelo"</div>
<div class="ln" style="top:127px">8</div>
<div class="cl" style="top:127px">        <b>&lt;/P&gt;</b></div>
<div class="ln" style="top:145px">9</div>
<div class="cl" style="top:145px">        <b>&lt;P&gt;</b></div>
<div class="ln" style="top:163px">10</div>
<div class="cl" style="top:163px">                Despues de varios conflictos en America del Sur</div>
<div class="ln" style="top:181px">11</div>
<div class="cl" style="top:181px">                y el esteblecimiento del imperio mexicano el</div>
<div class="ln" style="top:199px">12</div>
<div class="cl" style="top:199px">                15 de septiembre de 1821 se declaro la independencia</div>
<div class="ln" style="top:217px">13</div>
<div class="cl" style="top:217px">                en el reino de Guatemala. El acta de inedpendecia se</div>
<div class="ln" style="top:235px">14</div>
<div class="cl" style="top:235px">                firmo en el Real Palacio en la Nueva Guatemala de la Asuncion.</div>
<div class="ln" style="top:253px">15</div>
<div class="cl" style="top:253px">            <b>&lt;/P&gt;</b></div>
<div class="ln" style="top:271px">16</div>
<div class="cl" style="top:271px">            <b>&lt;TABLE </b><i>BORDER</i>=<u>"1"</u> <i>BGCOLOR</i>=<u>"Blue"</u><b>&gt;</b></div>
<div class="ln" style="top:289px">17</div>
<div class="cl" style="top:289px">                <b>&lt;TR&gt;</b></div>
<div class="ln" style="top:307px">18</div>
<div class="cl" style="top:307px">                    <b>&lt;TD&gt;</b>lunes<b>&lt;/TD&gt;</b></div>
<div class="ln" style="top:325px">19</div>
<div class="cl" style="top:325px">                    <b>&lt;TD&gt;</b>martes<b>&lt;/TD&gt;</b></div>
<div class="ln" style="top:343px">20</div>
<div class="cl" style="top:343px">                    <b>&lt;TD&gt;</b>miercoles<b>&lt;/TD&gt;</b></div>
<div class="ln" style="top:361px">21</div>
<div class="cl" style="top:361px">            <b>&lt;/TR&gt;</b></div>
<div class="ln" style="top:379px">22</div>
<div class="cl" style="top:379px">            <b>&lt;TR&gt;</b></div>
<div class="ln" style="top:397px">23</div>
<div class="cl" style="top:397px">                    <b>&lt;TD&gt;</b>25 <b>&lt;/TD&gt;</b></div>
<div class="ln" style="top:415px">24</div>
<div class="cl" style="top:415px">                    <b>&lt;TD&gt;</b>45 /TD</div>
<div class="ln" style="top:433px">25</div>
<div class="cl" style="top:433px">                    <b>&lt;TD&gt;</b>10<b>&lt;/TD&gt;</b></div>
<div class="ln" style="top:451px">26</div>
<div class="cl" style="top:451px">                <b>&lt;/TR&gt;</b></div>
<div class="ln" style="top:469px">27</div>
<div class="cl" style="top:469px">            <b>&lt;TABLE&gt;</b></div>
<div class="ln" style="top:487px">28</div>
<div class="cl" style="top:487px">        <b>&lt;BODY&gt;</b></div>
<div class="ln" style="top:505px">29</div>
<div class="cl" style="top:505px">    <b>&lt;/HTML&gt;</b></div>
<div class="ln" style="top:523px">30</div>
<svg class="abs" style="left:0;top:0" width="720" height="664" viewBox="0 0 720 664" shape-rendering="crispEdges"><line x1="98.5" y1="38" x2="98.5" y2="55" stroke="#bdbdbd" stroke-width="1" stroke-dasharray="1 1"/><line x1="98.5" y1="92" x2="98.5" y2="109" stroke="#bdbdbd" stroke-width="1" stroke-dasharray="1 1"/><line x1="98.5" y1="110" x2="98.5" y2="127" stroke="#bdbdbd" stroke-width="1" stroke-dasharray="1 1"/><line x1="130.5" y1="110" x2="130.5" y2="127" stroke="#bdbdbd" stroke-width="1" stroke-dasharray="1 1"/><line x1="162.5" y1="110" x2="162.5" y2="127" stroke="#bdbdbd" stroke-width="1" stroke-dasharray="1 1"/><line x1="98.5" y1="128" x2="98.5" y2="145" stroke="#bdbdbd" stroke-width="1" stroke-dasharray="1 1"/><line x1="98.5" y1="146" x2="98.5" y2="163" stroke="#bdbdbd" stroke-width="1" stroke-dasharray="1 1"/><line x1="98.5" y1="164" x2="98.5" y2="181" stroke="#bdbdbd" stroke-width="1" stroke-dasharray="1 1"/><line x1="130.5" y1="164" x2="130.5" y2="181" stroke="#bdbdbd" stroke-width="1" stroke-dasharray="1 1"/><line x1="162.5" y1="164" x2="162.5" y2="181" stroke="#bdbdbd" stroke-width="1" stroke-dasharray="1 1"/><line x1="98.5" y1="182" x2="98.5" y2="199" stroke="#bdbdbd" stroke-width="1" stroke-dasharray="1 1"/><line x1="130.5" y1="182" x2="130.5" y2="199" stroke="#bdbdbd" stroke-width="1" stroke-dasharray="1 1"/><line x1="162.5" y1="182" x2="162.5" y2="199" stroke="#bdbdbd" stroke-width="1" stroke-dasharray="1 1"/><line x1="98.5" y1="200" x2="98.5" y2="217" stroke="#bdbdbd" stroke-width="1" stroke-dasharray="1 1"/><line x1="130.5" y1="200" x2="130.5" y2="217" stroke="#bdbdbd" stroke-width="1" stroke-dasharray="1 1"/><line x1="162.5" y1="200" x2="162.5" y2="217" stroke="#bdbdbd" stroke-width="1" stroke-dasharray="1 1"/><line x1="98.5" y1="218" x2="98.5" y2="235" stroke="#bdbdbd" stroke-width="1" stroke-dasharray="1 1"/><line x1="130.5" y1="218" x2="130.5" y2="235" stroke="#bdbdbd" stroke-width="1" stroke-dasharray="1 1"/><line x1="162.5" y1="218" x2="162.5" y2="235" stroke="#bdbdbd" stroke-width="1" stroke-dasharray="1 1"/><line x1="98.5" y1="236" x2="98.5" y2="253" stroke="#bdbdbd" stroke-width="1" stroke-dasharray="1 1"/><line x1="130.5" y1="236" x2="130.5" y2="253" stroke="#bdbdbd" stroke-width="1" stroke-dasharray="1 1"/><line x1="162.5" y1="236" x2="162.5" y2="253" stroke="#bdbdbd" stroke-width="1" stroke-dasharray="1 1"/><line x1="98.5" y1="254" x2="98.5" y2="271" stroke="#bdbdbd" stroke-width="1" stroke-dasharray="1 1"/><line x1="130.5" y1="254" x2="130.5" y2="271" stroke="#bdbdbd" stroke-width="1" stroke-dasharray="1 1"/><line x1="98.5" y1="272" x2="98.5" y2="289" stroke="#bdbdbd" stroke-width="1" stroke-dasharray="1 1"/><line x1="130.5" y1="272" x2="130.5" y2="289" stroke="#bdbdbd" stroke-width="1" stroke-dasharray="1 1"/><line x1="98.5" y1="290" x2="98.5" y2="307" stroke="#bdbdbd" stroke-width="1" stroke-dasharray="1 1"/><line x1="130.5" y1="290" x2="130.5" y2="307" stroke="#bdbdbd" stroke-width="1" stroke-dasharray="1 1"/><line x1="162.5" y1="290" x2="162.5" y2="307" stroke="#bdbdbd" stroke-width="1" stroke-dasharray="1 1"/><line x1="98.5" y1="308" x2="98.5" y2="325" stroke="#bdbdbd" stroke-width="1" stroke-dasharray="1 1"/><line x1="130.5" y1="308" x2="130.5" y2="325" stroke="#bdbdbd" stroke-width="1" stroke-dasharray="1 1"/><line x1="162.5" y1="308" x2="162.5" y2="325" stroke="#bdbdbd" stroke-width="1" stroke-dasharray="1 1"/><line x1="194.5" y1="308" x2="194.5" y2="325" stroke="#bdbdbd" stroke-width="1" stroke-dasharray="1 1"/><line x1="98.5" y1="326" x2="98.5" y2="343" stroke="#bdbdbd" stroke-width="1" stroke-dasharray="1 1"/><line x1="130.5" y1="326" x2="130.5" y2="343" stroke="#bdbdbd" stroke-width="1" stroke-dasharray="1 1"/><line x1="162.5" y1="326" x2="162.5" y2="343" stroke="#bdbdbd" stroke-width="1" stroke-dasharray="1 1"/><line x1="194.5" y1="326" x2="194.5" y2="343" stroke="#bdbdbd" stroke-width="1" stroke-dasharray="1 1"/><line x1="98.5" y1="344" x2="98.5" y2="361" stroke="#bdbdbd" stroke-width="1" stroke-dasharray="1 1"/><line x1="130.5" y1="344" x2="130.5" y2="361" stroke="#bdbdbd" stroke-width="1" stroke-dasharray="1 1"/><line x1="162.5" y1="344" x2="162.5" y2="361" stroke="#bdbdbd" stroke-width="1" stroke-dasharray="1 1"/><line x1="194.5" y1="344" x2="194.5" y2="361" stroke="#bdbdbd" stroke-width="1" stroke-dasharray="1 1"/><line x1="98.5" y1="362" x2="98.5" y2="379" stroke="#bdbdbd" stroke-width="1" stroke-dasharray="1 1"/><line x1="130.5" y1="362" x2="130.5" y2="379" stroke="#bdbdbd" stroke-width="1" stroke-dasharray="1 1"/><line x1="98.5" y1="380" x2="98.5" y2="397" stroke="#bdbdbd" stroke-width="1" stroke-dasharray="1 1"/><line x1="130.5" y1="380" x2="130.5" y2="397" stroke="#bdbdbd" stroke-width="1" stroke-dasharray="1 1"/><line x1="98.5" y1="398" x2="98.5" y2="415" stroke="#bdbdbd" stroke-width="1" stroke-dasharray="1 1"/><line x1="130.5" y1="398" x2="130.5" y2="415" stroke="#bdbdbd" stroke-width="1" stroke-dasharray="1 1"/><line x1="162.5" y1="398" x2="162.5" y2="415" stroke="#bdbdbd" stroke-width="1" stroke-dasharray="1 1"/><line x1="194.5" y1="398" x2="194.5" y2="415" stroke="#bdbdbd" stroke-width="1" stroke-dasharray="1 1"/><line x1="98.5" y1="416" x2="98.5" y2="433" stroke="#bdbdbd" stroke-width="1" stroke-dasharray="1 1"/><line x1="130.5" y1="416" x2="130.5" y2="433" stroke="#bdbdbd" stroke-width="1" stroke-dasharray="1 1"/><line x1="162.5" y1="416" x2="162.5" y2="433" stroke="#bdbdbd" stroke-width="1" stroke-dasharray="1 1"/><line x1="194.5" y1="416" x2="194.5" y2="433" stroke="#bdbdbd" stroke-width="1" stroke-dasharray="1 1"/><line x1="98.5" y1="434" x2="98.5" y2="451" stroke="#bdbdbd" stroke-width="1" stroke-dasharray="1 1"/><line x1="130.5" y1="434" x2="130.5" y2="451" stroke="#bdbdbd" stroke-width="1" stroke-dasharray="1 1"/><line x1="162.5" y1="434" x2="162.5" y2="451" stroke="#bdbdbd" stroke-width="1" stroke-dasharray="1 1"/><line x1="194.5" y1="434" x2="194.5" y2="451" stroke="#bdbdbd" stroke-width="1" stroke-dasharray="1 1"/><line x1="98.5" y1="452" x2="98.5" y2="469" stroke="#bdbdbd" stroke-width="1" stroke-dasharray="1 1"/><line x1="130.5" y1="452" x2="130.5" y2="469" stroke="#bdbdbd" stroke-width="1" stroke-dasharray="1 1"/><line x1="162.5" y1="452" x2="162.5" y2="469" stroke="#bdbdbd" stroke-width="1" stroke-dasharray="1 1"/><line x1="98.5" y1="470" x2="98.5" y2="487" stroke="#bdbdbd" stroke-width="1" stroke-dasharray="1 1"/><line x1="130.5" y1="470" x2="130.5" y2="487" stroke="#bdbdbd" stroke-width="1" stroke-dasharray="1 1"/><line x1="98.5" y1="488" x2="98.5" y2="505" stroke="#bdbdbd" stroke-width="1" stroke-dasharray="1 1"/><line x1="98.5" y1="524" x2="98.5" y2="541" stroke="#bdbdbd" stroke-width="1" stroke-dasharray="1 1"/><line x1="130.5" y1="524" x2="130.5" y2="541" stroke="#bdbdbd" stroke-width="1" stroke-dasharray="1 1"/><line x1="162.5" y1="524" x2="162.5" y2="541" stroke="#bdbdbd" stroke-width="1" stroke-dasharray="1 1"/><defs><pattern id="sq" x="1" y="1" width="4" height="18" patternUnits="userSpaceOnUse"><rect x="0" y="13" width="1" height="1" fill="#ff0000"/><rect x="1" y="14" width="1" height="1" fill="#ff0000"/><rect x="2" y="15" width="1" height="1" fill="#ff0000"/><rect x="3" y="14" width="1" height="1" fill="#ff0000"/></pattern></defs><rect x="185" y="50" width="48" height="3" fill="url(#sq)"/><rect x="193" y="122" width="48" height="3" fill="url(#sq)"/><rect x="265" y="122" width="72" height="3" fill="url(#sq)"/><rect x="345" y="122" width="64" height="3" fill="url(#sq)"/><rect x="193" y="176" width="56" height="3" fill="url(#sq)"/><rect x="281" y="176" width="48" height="3" fill="url(#sq)"/><rect x="337" y="176" width="80" height="3" fill="url(#sq)"/><rect x="513" y="176" width="24" height="3" fill="url(#sq)"/><rect x="545" y="176" width="24" height="3" fill="url(#sq)"/><rect x="209" y="194" width="16" height="3" fill="url(#sq)"/><rect x="233" y="194" width="120" height="3" fill="url(#sq)"/><rect x="361" y="194" width="24" height="3" fill="url(#sq)"/><rect x="393" y="194" width="56" height="3" fill="url(#sq)"/><rect x="457" y="194" width="64" height="3" fill="url(#sq)"/><rect x="529" y="194" width="16" height="3" fill="url(#sq)"/><rect x="241" y="212" width="80" height="3" fill="url(#sq)"/><rect x="393" y="212" width="16" height="3" fill="url(#sq)"/><rect x="417" y="212" width="56" height="3" fill="url(#sq)"/><rect x="505" y="212" width="104" height="3" fill="url(#sq)"/><rect x="217" y="230" width="16" height="3" fill="url(#sq)"/><rect x="241" y="230" width="40" height="3" fill="url(#sq)"/><rect x="425" y="230" width="32" height="3" fill="url(#sq)"/><rect x="489" y="230" width="96" height="3" fill="url(#sq)"/><rect x="593" y="230" width="16" height="3" fill="url(#sq)"/><rect x="193" y="248" width="40" height="3" fill="url(#sq)"/><rect x="265" y="248" width="16" height="3" fill="url(#sq)"/><rect x="329" y="248" width="56" height="3" fill="url(#sq)"/><rect x="441" y="248" width="40" height="3" fill="url(#sq)"/><rect x="617" y="248" width="64" height="3" fill="url(#sq)"/><rect x="257" y="320" width="40" height="3" fill="url(#sq)"/><rect x="257" y="338" width="48" height="3" fill="url(#sq)"/><rect x="257" y="356" width="72" height="3" fill="url(#sq)"/><line x1="57.5" y1="15" x2="57.5" y2="293" stroke="#808080"/><line x1="57.5" y1="303" x2="57.5" y2="370" stroke="#ff0000"/><line x1="57.5" y1="370" x2="57.5" y2="532" stroke="#808080"/><line x1="57" y1="136.5" x2="63" y2="136.5" stroke="#808080"/><line x1="57" y1="262.5" x2="63" y2="262.5" stroke="#808080"/><line x1="57" y1="370.5" x2="63" y2="370.5" stroke="#ff0000"/><line x1="57" y1="460.5" x2="63" y2="460.5" stroke="#808080"/><line x1="57" y1="514.5" x2="63" y2="514.5" stroke="#808080"/><line x1="57" y1="532.5" x2="63" y2="532.5" stroke="#808080"/><rect x="52.5" y="5.5" width="10" height="10" fill="#f4f4f4" stroke="#808080"/><line x1="54.5" y1="10.5" x2="61" y2="10.5" stroke="#6e6e6e"/><rect x="52.5" y="23.5" width="10" height="10" fill="#f4f4f4" stroke="#808080"/><line x1="54.5" y1="28.5" x2="61" y2="28.5" stroke="#6e6e6e"/><rect x="52.5" y="59.5" width="10" height="10" fill="#f4f4f4" stroke="#808080"/><line x1="54.5" y1="64.5" x2="61" y2="64.5" stroke="#6e6e6e"/><rect x="52.5" y="77.5" width="10" height="10" fill="#f4f4f4" stroke="#808080"/><line x1="54.5" y1="82.5" x2="61" y2="82.5" stroke="#6e6e6e"/><rect x="52.5" y="95.5" width="10" height="10" fill="#f4f4f4" stroke="#808080"/><line x1="54.5" y1="100.5" x2="61" y2="100.5" stroke="#6e6e6e"/><rect x="52.5" y="149.5" width="10" height="10" fill="#f4f4f4" stroke="#808080"/><line x1="54.5" y1="154.5" x2="61" y2="154.5" stroke="#6e6e6e"/><rect x="52.5" y="275.5" width="10" height="10" fill="#f4f4f4" stroke="#808080"/><line x1="54.5" y1="280.5" x2="61" y2="280.5" stroke="#6e6e6e"/><rect x="52.5" y="293.5" width="10" height="10" fill="#f4f4f4" stroke="#ff0000"/><line x1="54.5" y1="298.5" x2="61" y2="298.5" stroke="#ff0000"/><rect x="52.5" y="383.5" width="10" height="10" fill="#f4f4f4" stroke="#808080"/><line x1="54.5" y1="388.5" x2="61" y2="388.5" stroke="#6e6e6e"/><rect x="52.5" y="419.5" width="10" height="10" fill="#f4f4f4" stroke="#808080"/><line x1="54.5" y1="424.5" x2="61" y2="424.5" stroke="#6e6e6e"/><rect x="52.5" y="473.5" width="10" height="10" fill="#f4f4f4" stroke="#808080"/><line x1="54.5" y1="478.5" x2="61" y2="478.5" stroke="#6e6e6e"/><rect x="52.5" y="491.5" width="10" height="10" fill="#f4f4f4" stroke="#808080"/><line x1="54.5" y1="496.5" x2="61" y2="496.5" stroke="#6e6e6e"/></svg>
</div>
<div class="abs" style="left:0;top:0;width:3px;height:72px;background:linear-gradient(90deg,#cfcfcf,#f1f1f1 55%,#fff)"></div><div class="abs" style="left:0;top:72px;width:2px;height:24px;background:linear-gradient(90deg,#d4d4d4,#fafafa)"></div>
</div>
</body></html>
